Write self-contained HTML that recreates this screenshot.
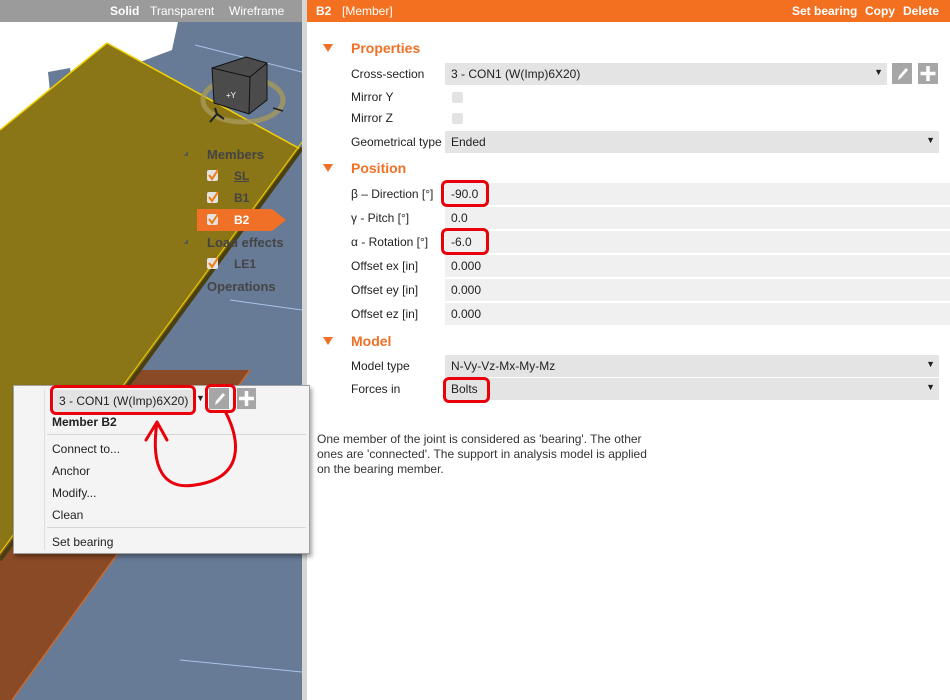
<!DOCTYPE html>
<html><head><meta charset="utf-8"><style>
*{margin:0;padding:0;box-sizing:border-box}
body{width:950px;height:700px;overflow:hidden;background:#fff;font-family:"Liberation Sans",sans-serif;font-size:12px;color:#222;position:relative}
.a{position:absolute}
.lbl{position:absolute;left:351px;font-size:12px;color:#222}
.fld{position:absolute;left:445px;height:22px;background:#f0f0f0;padding:4px 0 0 6px;font-size:12px}
.sel{background:#e4e4e4}
.hdr{position:absolute;left:351px;font-size:14px;font-weight:bold;color:#f07027}
.tri{position:absolute;left:323px;width:0;height:0;border-left:5px solid transparent;border-right:5px solid transparent;border-top:8px solid #f07027}
.red{position:absolute;border:3px solid #e8000b;border-radius:6px}
.cb{position:absolute;width:11px;height:11px;background:#e3e3e3;border-radius:2px}
.tr{position:absolute;font-size:12px;color:#444;font-weight:bold}
.mi{position:absolute;left:52px;font-size:12px;color:#222}
.ic{position:absolute;width:20px;height:21px;background:#a6a6a6}
</style></head><body>
<svg class="a" style="left:0;top:0" width="302" height="700">
<rect width="302" height="700" fill="#fff"/>
<polygon points="178,22 302,22 302,700 0,700 0,560 140,62 172,50" fill="#677b97"/>
<polygon points="48,72 70,68 72,85 50,92" fill="#677b97"/>
<line x1="195" y1="45" x2="302" y2="72" stroke="#a9c3e8" stroke-width="1"/>
<line x1="230" y1="300" x2="302" y2="310" stroke="#a9c3e8"/>
<line x1="180" y1="660" x2="302" y2="672" stroke="#a9c3e8"/>
<polygon points="0,545 130,370 250,370 12,700 0,700" fill="#8a4a25"/>
<line x1="250" y1="370" x2="12" y2="700" stroke="#c86a30" stroke-width="1.5"/>
<polygon points="0,130 107,43 302,150 302,146 0,555" fill="#8a7517"/>
<line x1="0" y1="130" x2="107" y2="43" stroke="#f2d000" stroke-width="1.5"/>
<line x1="107" y1="43" x2="302" y2="150" stroke="#f2d000" stroke-width="1.5"/>
<line x1="302" y1="148" x2="0" y2="560" stroke="#4a3f10" stroke-width="4"/>
<line x1="302" y1="142" x2="0" y2="553" stroke="#f2d000" stroke-width="1"/>
<ellipse cx="243" cy="100" rx="40" ry="22" fill="none" stroke="#a89a5a" stroke-width="5" opacity=".8"/>
<polygon points="212,68 246,57 267,63 267,100 249,114 214,103" fill="#4b4b4b" stroke="#111" stroke-width="1"/>
<polyline points="212,68 250,77 267,63" fill="none" stroke="#111"/>
<line x1="250" y1="77" x2="249" y2="114" stroke="#111"/>
<text x="226" y="98" fill="#fff" font-size="8">+Y</text>
<path d="M210 122 L217 114 L224 119 M217 114 L215 108" stroke="#222" stroke-width="2" fill="none"/>
<line x1="273" y1="108" x2="283" y2="111" stroke="#222" stroke-width="1.5"/>
</svg>
<div class="a" style="left:0;top:0;width:302px;height:22px;background:#9b9b9b"></div>
<div class="a" style="left:110px;top:4px;color:#fff;font-weight:bold">Solid</div>
<div class="a" style="left:150px;top:4px;color:#fff">Transparent</div>
<div class="a" style="left:229px;top:4px;color:#fff">Wireframe</div>
<div class="a" style="left:302px;top:0;width:5px;height:700px;background:#d6d6d6"></div>

<div class="a" style="left:184px;top:151px;border-left:4px solid transparent;border-bottom:5px solid #555;width:0;height:0"></div>
<div class="tr" style="left:207px;top:147px;font-size:13px">Members</div>
<div class="cb" style="left:207px;top:170px"></div><div class="tr" style="left:234px;top:169px;text-decoration:underline">SL</div>
<div class="cb" style="left:207px;top:192px"></div><div class="tr" style="left:234px;top:191px">B1</div>
<svg class="a" style="left:197px;top:209px" width="90" height="22"><polygon points="0,0 75,0 89,11 75,22 0,22" fill="#f07027"/></svg>
<div class="cb" style="left:207px;top:214px"></div><div class="tr" style="left:234px;top:213px;color:#fff">B2</div>
<div class="a" style="left:184px;top:239px;border-left:4px solid transparent;border-bottom:5px solid #555;width:0;height:0"></div>
<div class="tr" style="left:207px;top:235px;font-size:13px">Load effects</div>
<div class="cb" style="left:207px;top:258px"></div><div class="tr" style="left:234px;top:257px">LE1</div>
<div class="tr" style="left:207px;top:279px;font-size:13px">Operations</div>
<svg class="a" style="left:206px;top:165px" width="20" height="110" fill="none" stroke="#f07a10" stroke-width="2">
<path d="M3 10 L6 14 L12 5"/><path d="M3 32 L6 36 L12 27"/><path d="M3 54 L6 58 L12 49"/><path d="M3 98 L6 102 L12 93"/></svg>

<div class="a" style="left:307px;top:0;width:643px;height:22px;background:#f37021"></div>
<div class="a" style="left:316px;top:4px;color:#fff;font-weight:bold">B2</div>
<div class="a" style="left:342px;top:4px;color:#fff">[Member]</div>
<div class="a" style="left:792px;top:4px;color:#fff;font-weight:bold">Set bearing</div>
<div class="a" style="left:865px;top:4px;color:#fff;font-weight:bold">Copy</div>
<div class="a" style="left:903px;top:4px;color:#fff;font-weight:bold">Delete</div>

<div class="tri" style="top:44px"></div><div class="hdr" style="top:40px">Properties</div>
<div class="lbl" style="top:67px">Cross-section</div>
<div class="fld sel" style="top:63px;width:442px">3 - CON1 (W(Imp)6X20)<span style="position:absolute;right:4px;top:4px;font-size:9px">▼</span></div>
<div class="ic" style="left:892px;top:63px"></div>
<svg class="a" style="left:892px;top:63px" width="20" height="21"><path d="M6 17 L7 13 L14 5 L16 7 L9 15 Z" fill="#fff"/></svg>
<div class="ic" style="left:918px;top:63px"></div>
<svg class="a" style="left:918px;top:63px" width="20" height="21"><path d="M10 3 V18 M2.5 10.5 H17.5" stroke="#fff" stroke-width="3.5"/></svg>
<div class="lbl" style="top:90px">Mirror Y</div><div class="cb" style="left:452px;top:92px"></div>
<div class="lbl" style="top:111px">Mirror Z</div><div class="cb" style="left:452px;top:113px"></div>
<div class="lbl" style="top:135px">Geometrical type</div>
<div class="fld sel" style="top:131px;width:494px">Ended<span style="position:absolute;right:4px;top:4px;font-size:9px">▼</span></div>

<div class="tri" style="top:164px"></div><div class="hdr" style="top:160px">Position</div>
<div class="lbl" style="top:187px">β – Direction [°]</div><div class="fld" style="top:183px;width:505px">-90.0</div>
<div class="lbl" style="top:211px">γ - Pitch [°]</div><div class="fld" style="top:207px;width:505px">0.0</div>
<div class="lbl" style="top:235px">α - Rotation [°]</div><div class="fld" style="top:231px;width:505px">-6.0</div>
<div class="lbl" style="top:259px">Offset ex [in]</div><div class="fld" style="top:255px;width:505px">0.000</div>
<div class="lbl" style="top:283px">Offset ey [in]</div><div class="fld" style="top:279px;width:505px">0.000</div>
<div class="lbl" style="top:307px">Offset ez [in]</div><div class="fld" style="top:303px;width:505px">0.000</div>

<div class="tri" style="top:337px"></div><div class="hdr" style="top:333px">Model</div>
<div class="lbl" style="top:359px">Model type</div>
<div class="fld sel" style="top:355px;width:494px">N-Vy-Vz-Mx-My-Mz<span style="position:absolute;right:4px;top:4px;font-size:9px">▼</span></div>
<div class="lbl" style="top:382px">Forces in</div>
<div class="fld sel" style="top:378px;width:494px">Bolts<span style="position:absolute;right:4px;top:4px;font-size:9px">▼</span></div>

<div class="a" style="left:317px;top:432px;width:345px;line-height:15px;color:#333">One member of the joint is considered as 'bearing'. The other ones are 'connected'. The support in analysis model is applied on the bearing member.</div>

<div class="red" style="left:441px;top:180px;width:48px;height:27px"></div>
<div class="red" style="left:441px;top:228px;width:48px;height:27px"></div>
<div class="red" style="left:443px;top:377px;width:47px;height:26px"></div>

<div class="a" style="left:13px;top:385px;width:297px;height:169px;background:#f4f4f4;border:1px solid #a0a0a0;box-shadow:2px 3px 4px rgba(0,0,0,.35)"></div>
<div class="a" style="left:44px;top:390px;width:1px;height:160px;background:#ddd"></div>
<div class="a" style="left:54px;top:390px;width:140px;height:23px;background:#e3e3e3;padding:4px 0 0 5px">3 - CON1 (W(Imp)6X20)</div>
<div class="a" style="left:196px;top:393px;font-size:9px">▼</div>
<div class="ic" style="left:209px;top:388px;width:20px;height:21px"></div>
<svg class="a" style="left:209px;top:388px" width="20" height="21"><path d="M6 17 L7 13 L14 5 L16 7 L9 15 Z" fill="#fff"/></svg>
<div class="ic" style="left:237px;top:388px;width:19px;height:21px"></div>
<svg class="a" style="left:237px;top:388px" width="19" height="21"><path d="M9.5 3 V18 M2 10.5 H17" stroke="#fff" stroke-width="3.5"/></svg>
<div class="mi" style="top:415px;font-weight:bold">Member B2</div>
<div class="a" style="left:47px;top:434px;width:259px;height:1px;background:#d5d5d5"></div>
<div class="mi" style="top:442px">Connect to...</div>
<div class="mi" style="top:464px">Anchor</div>
<div class="mi" style="top:486px">Modify...</div>
<div class="mi" style="top:508px">Clean</div>
<div class="a" style="left:47px;top:527px;width:259px;height:1px;background:#d5d5d5"></div>
<div class="mi" style="top:535px">Set bearing</div>
<div class="red" style="left:50px;top:385px;width:146px;height:30px"></div>
<div class="red" style="left:205px;top:384px;width:31px;height:29px"></div>
<svg class="a" style="left:0;top:0" width="310" height="700"><path d="M157 422 C150 470,165 490,195 485 C245 478,240 440,226 413 M146 440 L157 422 L167 440" fill="none" stroke="#e8000b" stroke-width="3" stroke-linecap="round" stroke-linejoin="round"/></svg>
</body></html>
